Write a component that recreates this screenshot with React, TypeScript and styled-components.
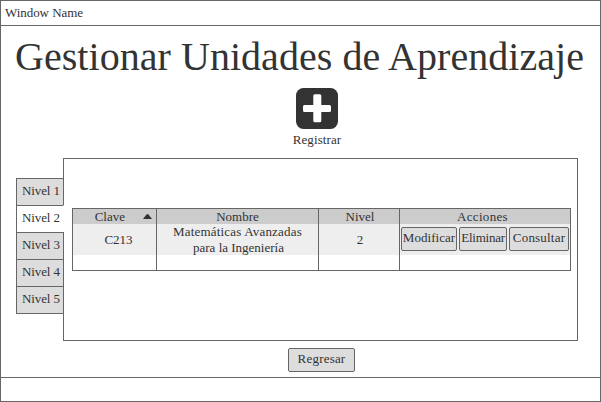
import React from "react";
import styled, { createGlobalStyle } from "styled-components";

const line = "#666666";
const ink = "#333333";

const GlobalStyle = createGlobalStyle`
  * { box-sizing: border-box; }
  body {
    margin: 0;
    background: #fff;
    color: ${ink};
    font: 13px/16px "Liberation Serif", "Times New Roman", serif;
  }
`;

const Window = styled.div`
  width: 601px;
  height: 402px;
  display: flex;
  flex-direction: column;
  border: 1px solid ${line};
  overflow: hidden;
`;

const TitleBar = styled.header`
  height: 25px;
  flex: none;
  padding: 4px 0 0 4px;
  border-bottom: 1px solid ${line};
  letter-spacing: -0.05px;
`;

const Content = styled.main`
  flex: 1;
  display: flex;
  flex-direction: column;
  align-items: center;
`;

const Heading = styled.h1`
  margin: 7px 2px 0 0;
  height: 55px;
  font-size: 40px;
  line-height: 48px;
  font-weight: 400;
  letter-spacing: 0.04px;
  white-space: nowrap;
`;

const RegisterAction = styled.div`
  height: 70px;
  margin-left: 33px;
  display: flex;
  flex-direction: column;
  align-items: center;
  gap: 2px;
  letter-spacing: 0.1px;

  svg { display: block; }
`;

const Workspace = styled.section`
  align-self: stretch;
  display: flex;
  height: 183px;
  padding-left: 15px;
`;

const Tabs = styled.nav`
  width: 48px;
  margin: 20px -1px 0 0;
  position: relative;
`;

const Tab = styled.div<{ $active?: boolean }>`
  height: 28px;
  margin-bottom: -1px;
  padding: 4px 0 0 5px;
  border: 1px solid ${line};
  border-right-color: ${(p) => (p.$active ? "#fff" : line)};
  background: ${(p) => (p.$active ? "#fff" : "#dddddd")};
  letter-spacing: -0.1px;
  white-space: nowrap;
`;

const Panel = styled.div`
  width: 515px;
  border: 1px solid ${line};
  padding: 49px 0 0 8px;
`;

const Table = styled.div`
  width: 499px;
  height: 63px;
  display: grid;
  grid-template-columns: 84px 162px 81px 170px;
  grid-template-rows: 15px 31px 15px;
  border: 1px solid ${line};
`;

const Cell = styled.div<{ $tone?: string; $last?: boolean }>`
  display: flex;
  align-items: center;
  justify-content: center;
  text-align: center;
  white-space: nowrap;
  background: ${(p) => p.$tone ?? "#fff"};
  border-right: ${(p) => (p.$last ? "none" : `1px solid ${line}`)};
`;

const SortHeader = styled(Cell)`
  justify-content: flex-end;
  gap: 18px;
  padding-right: 4px;
`;

const KeyCell = styled(Cell)`
  padding-left: 8px;
`;

const LevelCell = styled(Cell)`
  padding-left: 2px;
`;

const ActionsHeader = styled(Cell)`
  padding-right: 5px;
  letter-spacing: 0.3px;
`;

const CourseLead = styled.div`
  letter-spacing: 0.18px;
`;

const CourseRest = styled.div`
  padding-left: 2px;
`;

const Actions = styled(Cell)`
  justify-content: flex-start;
  align-items: flex-start;
  padding: 3px 0 0 1px;
  gap: 2px;
`;

const Button = styled.button<{ $width: number; $tracking?: number }>`
  width: ${(p) => p.$width}px;
  height: 24px;
  flex: none;
  padding: 0 0 2px;
  display: flex;
  align-items: center;
  justify-content: center;
  border: 1px solid ${line};
  border-radius: 2px;
  background: #dddddd;
  color: inherit;
  font: inherit;
  letter-spacing: ${(p) => p.$tracking ?? 0}px;
  white-space: nowrap;
`;

const BackRow = styled.div`
  padding: 7px 0 0 42px;
`;

const Footer = styled.footer`
  height: 24px;
  flex: none;
  border-top: 1px solid ${line};
`;

const levels = [1, 2, 3, 4, 5];
const head = "#cccccc";
const row = "#eeeeee";

export default function App() {
  return (
    <>
      <GlobalStyle />
      <Window>
        <TitleBar>Window Name</TitleBar>
        <Content>
          <Heading>Gestionar Unidades de Aprendizaje</Heading>
          <RegisterAction>
            <svg width="42" height="42" viewBox="0 0 42 42">
              <rect width="42" height="41" rx="7.5" fill={ink} />
              <path
                d="M18.800 6.300h5q1.500 0 1.500 1.500v9.200h8.200q1.500 0 1.500 1.500v4q0 1.500-1.500 1.500h-8.200v8.800q0 1.500-1.500 1.500h-5q-1.500 0-1.500-1.500V24H8.500q-1.500 0-1.500-1.500v-4q0-1.500 1.500-1.500h8.800V7.800q0-1.500 1.500-1.500Z"
                fill="#fff"
              />
            </svg>
            <span>Registrar</span>
          </RegisterAction>
          <Workspace>
            <Tabs>
              {levels.map((n) => (
                <Tab key={n} $active={n === 2}>
                  Nivel {n}
                </Tab>
              ))}
            </Tabs>
            <Panel>
              <Table>
                <SortHeader $tone={head}>
                  <span>Clave</span>
                  <svg width="9" height="5" viewBox="0 0 9 5">
                    <path d="M0 5 3.500 0.500Q4.500-0.500 5.500 0.500L9 5Z" fill={ink} />
                  </svg>
                </SortHeader>
                <Cell $tone={head}>Nombre</Cell>
                <LevelCell $tone={head}>Nivel</LevelCell>
                <ActionsHeader $tone={head} $last>Acciones</ActionsHeader>
                <KeyCell $tone={row}>C213</KeyCell>
                <Cell $tone={row}>
                  <div>
                    <CourseLead>Matemáticas Avanzadas</CourseLead>
                    <CourseRest>para la Ingeniería</CourseRest>
                  </div>
                </Cell>
                <LevelCell $tone={row}>2</LevelCell>
                <Actions $tone={row} $last>
                  <Button $width={56} $tracking={0.05}>Modificar</Button>
                  <Button $width={48} $tracking={-0.25}>Eliminar</Button>
                  <Button $width={60} $tracking={0.2}>Consultar</Button>
                </Actions>
                <Cell />
                <Cell />
                <Cell />
                <Cell $last />
              </Table>
            </Panel>
          </Workspace>
          <BackRow>
            <Button $width={67} $tracking={0.2}>Regresar</Button>
          </BackRow>
        </Content>
        <Footer />
      </Window>
    </>
  );
}
